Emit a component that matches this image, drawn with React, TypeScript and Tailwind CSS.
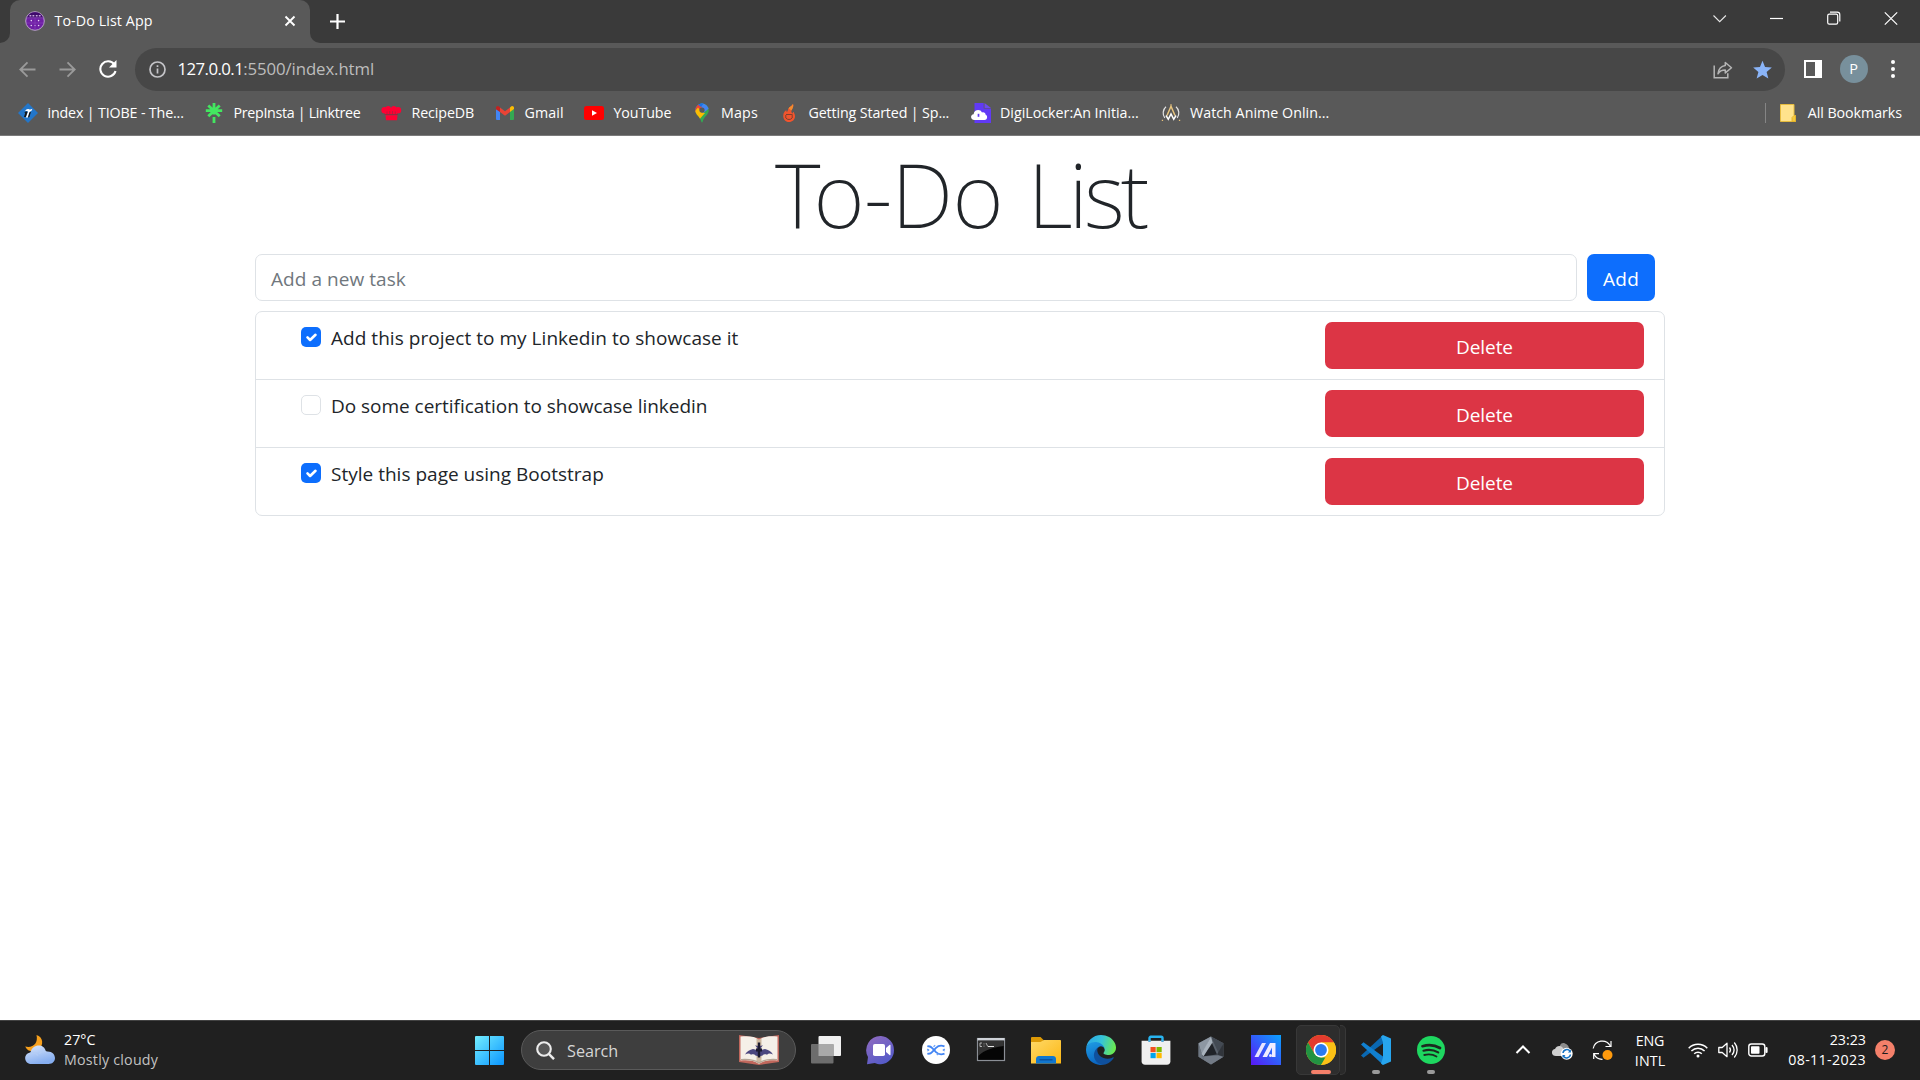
import type { ReactNode } from 'react';

function TabFavicon() {
  return (
    <svg width="20" height="20" viewBox="0 0 20 20" className="shrink-0">
      <circle cx="10" cy="10" r="9.3" fill="#6f1fa5" stroke="#b9a3c8" strokeWidth="1" />
      <path d="M2 6.5A8.8 8.8 0 0 1 18 6.5z" fill="#3f0a6b" />
      <path d="M1 6.8h18" stroke="#8f5bb8" strokeWidth=".6" />
      <path d="M4.5 4.8h1.8M7.5 4.8h1.8M10.8 4.8h1.8M13.8 4.8h1.8" stroke="#c7a8dd" strokeWidth="1.6" />
      <path d="M10 7v12M1 12h18" stroke="#8b45bd" strokeWidth=".6" />
      <g fill="#e5d3f3">
        <circle cx="6.3" cy="9.6" r=".8" />
        <circle cx="13.6" cy="9.6" r=".8" />
        <circle cx="6.3" cy="14.5" r=".8" />
        <circle cx="13.6" cy="14.5" r=".8" />
        <circle cx="10" cy="14.5" r=".5" />
      </g>
    </svg>
  );
}

function TiobeIcon() {
  return (
    <svg width="20" height="20" viewBox="0 0 20 20">
      <path d="M10 0l10 10-10 10L0 10z" fill="#2376c9" />
      <path d="M7 8.3C8 6.300 9.500 5.800 11 6.300c1.300.4 2.200.3 3.300-.5-.3 1.700-1.100 2.700-2.500 2.900L10 14.500H7.800L10 8.600C8.800 8 8 8 7 8.300z" fill="#fff" />
      <path d="M6.200 9.500C7.500 8.300 8.700 8.400 9.500 9l-1.700 5H6l1.300-4.200z" fill="#141414" />
      <path d="M11.300 9.500l1.700-.7-1.600 5.200-1.500.6z" fill="#141414" />
    </svg>
  );
}

function LinktreeIcon() {
  return (
    <svg width="20" height="20" viewBox="0 0 20 20" stroke="#43e660" strokeWidth="2.800" fill="none">
      <path d="M10 0v11.5M10 14v6M1.800 7.700h16.400M4.300 2.400l11.400 10.800M15.700 2.400L4.300 13.200" />
    </svg>
  );
}

function ChefIcon() {
  return (
    <svg width="21" height="20" viewBox="0 0 21 20" fill="#ff0033">
      <circle cx="3.600" cy="7.300" r="3.200" />
      <circle cx="7.200" cy="5.600" r="2.700" />
      <circle cx="12.800" cy="5.600" r="2.700" />
      <circle cx="17" cy="7.300" r="3.200" />
      <path d="M4 5h12v6.500h-12z" />
      <path d="M4.500 12.300h12l-.5 5H5z" />
      <path d="M3.500 11.500h13.500" stroke="#8f2c40" strokeWidth=".9" />
      <path d="M6 8.500v2.500M8.700 8v3M11.500 8v3M14.300 8.500v2.500" stroke="#9c2842" strokeWidth=".7" />
    </svg>
  );
}

function GmailIcon() {
  return (
    <svg width="20" height="20" viewBox="0 0 20 20">
      <path d="M1 6v9.700c0 .8.500 1.300 1.300 1.300H5V8.500z" fill="#4285f4" />
      <path d="M15 8.500V17h2.700c.8 0 1.300-.5 1.300-1.300V6z" fill="#34a853" />
      <path d="M15 4.600V9l4-3V5c0-1.800-2-2.500-3.200-1.300z" fill="#fbbc04" />
      <path d="M5 9V4.600l5 3.700 5-3.700V9l-5 3.800z" fill="#ea4335" />
      <path d="M1 5v1.300L5 9V4.600L4.200 3.700C3 2.500 1 3.200 1 5z" fill="#c5221f" />
    </svg>
  );
}

function YouTubeIcon() {
  return (
    <svg width="20" height="20" viewBox="0 0 20 20">
      <rect x="0" y="3" width="20" height="14" rx="2.500" fill="#f00" />
      <path d="M8 7.300v5.400l5-2.700z" fill="#fff" />
    </svg>
  );
}

function MapsIcon() {
  return (
    <svg width="20" height="20" viewBox="0 0 20 20">
      <clipPath id="pin">
        <path d="M10 .5a6.700 6.700 0 0 0-6.700 6.700c0 4.800 5 6.300 6 11.600.2 1 1.200 1 1.400 0 1-5.300 6-6.800 6-11.600A6.700 6.700 0 0 0 10 .5z" />
      </clipPath>
      <g clipPath="url(#pin)">
        <path d="M0 0h20v20H0z" fill="#34a853" />
        <path d="M0 13L12 0H0z" fill="#1a73e8" />
        <path d="M8 0h12v3L10 11 6 5z" fill="#4285f4" />
        <path d="M0 0h5.500L10 4 5 10 0 8z" fill="#ea4335" />
        <path d="M2 9l4-4.500L10 9.500l3 .5-7 8z" fill="#fbbc04" />
        <path d="M4 0h8l-3 4z" fill="#1a73e8" />
      </g>
      <circle cx="10" cy="7.100" r="2.600" fill="#595959" />
    </svg>
  );
}

function FireIcon() {
  return (
    <svg width="20" height="20" viewBox="0 0 20 20">
      <path d="M14 1c-1.500 2.500-3.500 2.500-4.500 4.500-1 1.800-.5 2.800-1.500 3.200-.8-.2-.8-1.200-.5-2C4.500 9 4 11.500 4.300 14c.4 3 3 5 5.700 5 3.400 0 6-2.500 6-5.800 0-2.200-1.200-3-1.200-4.400-1 .6-1.300 1.200-1.300 2C12 9 12 7.500 13 6c1.200-1.800 1.700-3 1-5z" fill="#f2542d" />
      <path d="M14 1c-1.500 2.500-3.500 2.500-4.500 4.500l3 2C14 5 14.700 3 14 1z" fill="#f28a2e" />
      <path d="M7 11.500h6.500M6.800 12v3c1.500 2 5 2 6.400 0v-3" stroke="#80402f" strokeWidth="1" fill="none" />
    </svg>
  );
}

function DigiLockerIcon() {
  return (
    <svg width="20" height="20" viewBox="0 0 20 20">
      <path d="M3.500 0h9.200v5.500H20V20H3.500z" fill="#613af5" />
      <path d="M13.500 0L20 5h-6.500z" fill="#6d4af0" />
      <path d="M3.500 17C-.8 17-1 11.500 2.600 11.200 2.800 6.500 9.500 5.500 11 9.500c2-.6 3.700.6 3.600 2.300 2.400.8 1.900 5.200-1.200 5.200z" fill="#fff" />
      <path d="M7.500 10.800v3" stroke="#613af5" strokeWidth="1.700" />
    </svg>
  );
}

function AnimeIcon() {
  return (
    <svg width="20" height="20" viewBox="0 0 20 20" fill="none">
      <path d="M5 3.800C1.800 6.500 1.200 11.500 3.800 15M15 3.800c3.200 2.700 3.800 7.700 1.200 11.200" stroke="#e4e4e4" strokeWidth="1.200" />
      <path d="M6 12.500L10 3.300l4 9.200" stroke="#eac67f" strokeWidth="1.500" />
      <path d="M5 12.500l2.300 3.800L10 11l2.700 5.300 2.300-3.800" stroke="#fff" strokeWidth="1.500" />
      <path d="M.8 17.300h1.300M17.900 17.300h1.300" stroke="#e8c27a" strokeWidth="1.300" />
      <path d="M9.400 1.800h1.200" stroke="#eac67f" strokeWidth="1.200" />
    </svg>
  );
}

const bookmarks: { label: string; icon: ReactNode; width: string; tracking: string }[] = [
  { label: 'index | TIOBE - The...', icon: <TiobeIcon />, width: 'w-[186px]', tracking: 'tracking-[-0.15px]' },
  { label: 'PrepInsta | Linktree', icon: <LinktreeIcon />, width: 'w-[177px]', tracking: 'tracking-[-0.31px]' },
  { label: 'RecipeDB', icon: <ChefIcon />, width: 'w-[114px]', tracking: 'tracking-[-0.1px]' },
  { label: 'Gmail', icon: <GmailIcon />, width: 'w-[89px]', tracking: 'tracking-[0.1px]' },
  { label: 'YouTube', icon: <YouTubeIcon />, width: 'w-[107.500px]', tracking: 'tracking-[-0.1px]' },
  { label: 'Maps', icon: <MapsIcon />, width: 'w-[87.500px]', tracking: 'tracking-[0.15px]' },
  { label: 'Getting Started | Sp...', icon: <FireIcon />, width: 'w-[191.500px]', tracking: 'tracking-[-0.13px]' },
  { label: 'DigiLocker:An Initia...', icon: <DigiLockerIcon />, width: 'w-[190px]', tracking: 'tracking-[0px]' },
  { label: 'Watch Anime Onlin...', icon: <AnimeIcon />, width: 'w-[190px]', tracking: 'tracking-[0.03px]' },
];

function TabStrip() {
  return (
    <div className="flex h-[43px] bg-[#3a3a3a] text-white">
      <div className="flex w-[10px] flex-col justify-end bg-[#595959]">
        <div className="h-[43px] rounded-br-[10px] bg-[#3a3a3a]" />
      </div>
      <div className="flex w-[300px] items-center rounded-t-[10px] bg-[#595959] pr-[14px] pb-px pl-[15px]">
        <TabFavicon />
        <span className="ml-[9.500px] flex-1 pb-px text-[14.250px] tracking-[0.1px] whitespace-nowrap">To-Do List App</span>
        <svg width="12" height="12" viewBox="0 0 12 12" stroke="#fff" strokeWidth="1.900">
          <path d="M1.500 1.500l9 9M10.500 1.500l-9 9" />
        </svg>
      </div>
      <div className="w-[10px] bg-[#595959]">
        <div className="h-[43px] rounded-bl-[10px] bg-[#3a3a3a]" />
      </div>
      <svg className="mt-[13px] ml-[9px]" width="17" height="17" viewBox="0 0 17 17" stroke="#fff" strokeWidth="2.200">
        <path d="M8.500 1v15M1 8.500h15" />
      </svg>
      <div className="ml-auto flex items-start pt-[11px] pr-[22px]">
        <svg width="14" height="16" viewBox="0 0 14 16" fill="none" stroke="#e8e8e8" strokeWidth="1.100">
          <path d="M.5 4.500L6.700 10.700l6.200-6.200" />
        </svg>
        <svg className="ml-[43px]" width="13" height="16" viewBox="0 0 13 16" stroke="#fff" strokeWidth="1.200">
          <path d="M0 7.500h13" />
        </svg>
        <svg className="ml-[44px]" width="14" height="16" viewBox="0 0 14 16" fill="none" stroke="#fff" strokeWidth="1.200">
          <rect x=".7" y="3.200" width="10" height="10" rx="1.600" />
          <path d="M3 1.200h7.200c1.500 0 2.600 1 2.600 2.600v6.700" />
        </svg>
        <svg className="ml-[43px]" width="14" height="16" viewBox="0 0 14 16" stroke="#fff" strokeWidth="1.200">
          <path d="M.8 1.300l12.400 12.400M13.200 1.300L.8 13.700" />
        </svg>
      </div>
    </div>
  );
}

function Toolbar() {
  return (
    <div className="flex h-[52px] items-start bg-[#595959] pt-[5px]">
      <div className="flex h-[43px] w-[135px] items-center pb-px pl-[19px]">
        <svg width="17" height="17" viewBox="0 0 17 17" fill="none" stroke="#9a9a9a" strokeWidth="1.800">
          <path d="M16.500 8.500H1.500M8.500 1.300L1.300 8.500l7.200 7.200" />
        </svg>
        <svg className="ml-[23px]" width="17" height="17" viewBox="0 0 17 17" fill="none" stroke="#9a9a9a" strokeWidth="1.800">
          <path d="M.5 8.500h15M8.500 1.300l7.200 7.200-7.200 7.200" />
        </svg>
        <svg className="ml-[23px]" width="18" height="18" viewBox="0 0 18 18" fill="none">
          <path d="M15.300 4.500A7.700 7.700 0 1 0 16.500 11" stroke="#fff" strokeWidth="2.100" />
          <path d="M17.500 0v7.500H10z" fill="#fff" />
        </svg>
      </div>
      <div className="flex h-[43px] w-[1650px] items-center rounded-full bg-[#474747] pr-[13px] pl-[14px]">
        <svg width="17" height="17" viewBox="0 0 17 17" fill="none" stroke="#c4c4c8">
          <circle cx="8.500" cy="8.500" r="7.500" strokeWidth="1.700" />
          <path d="M8.500 7.500v5M8.500 4.200v1.800" strokeWidth="1.700" />
        </svg>
        <span className="ml-[11.500px] pb-px text-[16.800px] whitespace-nowrap text-white">
          <span className="tracking-[-0.56px]">127.0.0.1</span>
          <span className="tracking-[-0.1px] text-[#bdbdbd]">:5500/index.html</span>
        </span>
        <svg className="ml-auto" width="20" height="18" viewBox="0 0 20 18" fill="none" stroke="#b5b5b5" strokeWidth="1.500">
          <path d="M1.200 4.500v12.300h13.600v-4.500" />
          <path d="M12.300 1.500l6.200 5.200-6.200 5.200V9c-4 0-5.800 1.200-7.300 3.800.5-4.200 2.800-7.600 7.300-8.200z" strokeLinejoin="round" />
        </svg>
        <svg className="ml-[20px]" width="19" height="19" viewBox="0 0 24 24" fill="#8ab4f8">
          <path d="M12 .8l3.200 8.100 8.600.6-6.600 5.500 2.200 8.500L12 18.800l-7.400 4.700 2.200-8.500L.2 9.500l8.600-.6z" />
        </svg>
      </div>
      <div className="flex h-[43px] flex-1 items-center pb-px pl-[18.500px]">
        <div className="flex h-[18px] w-[18px] bg-white p-[2px]">
          <div className="h-[14px] w-[9px] bg-[#595959]" />
        </div>
        <div className="ml-[18px] flex h-7 w-7 items-center justify-center rounded-full bg-[#78909c] text-[14.500px] text-white">P</div>
        <div className="ml-[23px] flex flex-col gap-[3px]">
          <div className="h-[4px] w-[4px] rounded-full bg-white" />
          <div className="h-[4px] w-[4px] rounded-full bg-white" />
          <div className="h-[4px] w-[4px] rounded-full bg-white" />
        </div>
      </div>
    </div>
  );
}

function BookmarkBar() {
  return (
    <div className="flex h-[41px] items-center border-b border-[#7b7b7b] bg-[#595959] pb-[4px] pl-[18px] text-[14.250px] text-white">
      {bookmarks.map((b) => (
        <div key={b.label} className={`flex shrink-0 items-center gap-[9.500px] whitespace-nowrap ${b.width}`}>
          {b.icon}
          <span className={b.tracking}>{b.label}</span>
        </div>
      ))}
      <div className="ml-auto flex items-center pr-[18px]">
        <div className="h-5 w-px bg-[#858585]" />
        <svg className="ml-[14px]" width="16" height="18" viewBox="0 0 16 18">
          <path d="M.5 .5h13.500v11h1.500v6H.5z" fill="#ffe38c" stroke="#e6bc3e" strokeWidth="1" />
          <path d="M12 17.500v-4l2-2h1.500v6z" fill="#f5c93c" stroke="#dfae27" strokeWidth=".8" />
        </svg>
        <span className="ml-[12px] tracking-[-0.05px]">All Bookmarks</span>
      </div>
    </div>
  );
}

const tasks = [
  { label: 'Add this project to my Linkedin to showcase it', done: true, tracking: 'tracking-[0.04px]', height: 'h-[68px]' },
  { label: 'Do some certification to showcase linkedin', done: false, tracking: 'tracking-[-0.03px]', height: 'h-[68px]' },
  { label: 'Style this page using Bootstrap', done: true, tracking: 'tracking-[0.01px]', height: 'h-[67px]' },
];

function Checkbox({ checked }: { checked: boolean }) {
  if (!checked) return <div className="mt-[5px] h-5 w-5 rounded-[5px] border border-[#dee2e6] bg-white" />;
  return (
    <div className="mt-[5px] h-5 w-5 rounded-[5px] bg-[#0d6efd]">
      <svg width="20" height="20" viewBox="0 0 20 20" fill="none" stroke="#fff" strokeWidth="2.600" strokeLinecap="round" strokeLinejoin="round">
        <path d="M6.500 10.400l2.600 2.600 5.400-5.200" />
      </svg>
    </div>
  );
}

function TodoPage() {
  return (
    <main className="flex h-[884px] flex-col items-center bg-white text-[19px] text-[#212529]">
      <h1 className="mt-[4px] h-[114px] pl-[1px] font-['Noto_Sans','Open_Sans',sans-serif] text-[88px] leading-[108px] font-[250] whitespace-nowrap">
        <span className="tracking-[-0.700px]">To-Do</span>
        <span className="tracking-[1.800px]"> </span>
        <span className="tracking-[-3.800px]">List</span>
      </h1>
      <div className="flex w-[1410px] gap-[10px] pr-[10px]">
        <div className="flex h-[47px] flex-1 items-center rounded-[7px] border border-[#dee2e6] px-[15px] pt-[4px] tracking-[0.06px] text-[#70777d]">Add a new task</div>
        <div className="flex h-[47px] w-[68px] items-center justify-center rounded-[7px] bg-[#0d6efd] pt-[4px] tracking-[0.300px] text-white">Add</div>
      </div>
      <ul className="mt-[10px] w-[1410px] divide-y divide-[#dee2e6] rounded-[7px] border border-[#dee2e6]">
        {tasks.map((t) => (
          <li key={t.label} className={`flex justify-between pr-5 pl-[45px] ${t.height}`}>
            <div className="flex pt-[10px]">
              <Checkbox checked={t.done} />
              <span className={`ml-[10px] pt-px leading-[30px] whitespace-nowrap ${t.tracking}`}>{t.label}</span>
            </div>
            <div className="mt-[10px] flex h-[47px] w-[319px] items-center justify-center rounded-[7px] bg-[#dc3545] pt-[3px] tracking-[-0.100px] text-white">Delete</div>
          </li>
        ))}
      </ul>
    </main>
  );
}

function TaskCell({ children, dot }: { children: ReactNode; dot?: boolean }) {
  return (
    <div className="flex h-[60px] w-[55px] shrink-0 flex-col items-center pt-[15px]">
      {children}
      {dot && <div className="mt-[5px] h-1 w-2 rounded-full bg-[#9a9a9a]" />}
    </div>
  );
}

function WeatherIcon() {
  return (
    <svg width="30" height="30" viewBox="0 0 30 30">
      <defs>
        <linearGradient id="cloud" x1="0" y1="0" x2=".4" y2="1">
          <stop offset="0" stopColor="#dbe7fb" />
          <stop offset="1" stopColor="#86aef0" />
        </linearGradient>
      </defs>
      <path d="M11.500 0c7 2 7.500 10.500 2 14.500C9 18 2 16.500.2 11.500 7.500 13.500 13.500 8.500 11.500 0z" fill="#f7a01d" />
      <path d="M6.500 29C-1.500 29-2 18.500 5.500 17.500 7 9 19 7.500 21 16.500 32 15 33 29 23.500 29z" fill="url(#cloud)" />
      <path d="M5.500 18c3-1.500 6 .2 7.200 2.500M14 19c2-2.500 5-2.800 7.500-2.200" stroke="#b4cdf5" strokeWidth="1.200" fill="none" />
    </svg>
  );
}

function BookIcon() {
  return (
    <svg width="40" height="30" viewBox="0 0 40 30">
      <path d="M0 0l20 3 20-3v27l-20 3L0 27z" fill="#c0675c" />
      <path d="M1.500 1.500C9 .8 16 1 20 5c4-4 11-4.200 18.500-3.500v24c-7-.5-13.500-.3-18.500 3.500-5-3.800-11.500-4-18.500-3.500z" fill="#f5f0e8" />
      <path d="M17.500 3.500L20 5l2.500-1.500v23L20 29l-2.500-2.500z" fill="#cdb99f" />
      <path d="M2 24.500c7-.5 13-.3 18 3.500 5-3.800 11-4 18-3.500" stroke="#b5a797" strokeWidth="1.200" fill="none" />
      <path d="M6 19.500c2-3.500 5-4.500 8-5.500l3 .8 1.500-1.500-2.500-3 2.500.7L20 9l1.500 2 2.500-.7-2.500 3 1.500 1.500 3-.8c3 1 6 2 8 5.500-3-1.500-4.500-1.200-6 .3-2-.8-3.500-.5-4.500.7L20 21.500l-3.500-1c-1-1.200-2.500-1.500-4.500-.7-1.500-1.500-3-1.800-6-.3z" fill="#4b477f" />
      <path d="M20 7.500v15" stroke="#1c1b30" strokeWidth="2.400" />
      <path d="M17 15h6" stroke="#1c1b30" strokeWidth="3" />
    </svg>
  );
}

function TaskViewIcon() {
  return (
    <svg width="30" height="30" viewBox="0 0 30 30">
      <rect x="7.500" y="1" width="22.500" height="20" rx="1" fill="#f0f0f0" />
      <rect x="0" y="9" width="22.500" height="19.500" rx="1" fill="#6d6d6d" />
      <rect x="7.500" y="9" width="15" height="12" fill="#a9a9a9" />
    </svg>
  );
}

function ChatIcon() {
  return (
    <svg width="30" height="30" viewBox="0 0 30 30">
      <defs>
        <linearGradient id="chat" x1=".2" y1="0" x2=".8" y2="1">
          <stop offset="0" stopColor="#8d6ac0" />
          <stop offset="1" stopColor="#5059c9" />
        </linearGradient>
      </defs>
      <path d="M15 1a14.200 14.200 0 0 1 0 28.300c-2.500 0-4.500-.5-6.200-1.300L1 29.300 2 22A14.200 14.200 0 0 1 15 1z" fill="url(#chat)" />
      <rect x="7" y="9" width="12" height="12" rx="1.800" fill="#fff" />
      <path d="M20 13l3.500-3c.6-.4 1 0 1 .5v9c0 .5-.4 1-1 .5l-3.500-3z" fill="#fff" />
    </svg>
  );
}

function NearbyIcon() {
  return (
    <svg width="30" height="30" viewBox="0 0 30 30" fill="none">
      <circle cx="15" cy="15" r="14" fill="#fff" />
      <path d="M6.300 18.500c2 .8 3.500 0 5-1.700l3.700-3.900c2-2 4.500-3 8.500-1.500" stroke="#4285f4" strokeWidth="1.800" />
      <path d="M6.300 11.500c2-.8 3.500 0 5 1.700l3.700 3.900c2 2 4.500 3 8.500 1.500" stroke="#4285f4" strokeWidth="1.800" />
      <path d="M6.300 14l1.200 1-1.200 1M23.700 14l-1.200 1 1.200 1" stroke="#5c97f6" strokeWidth="1.500" />
      <path d="M12.500 11.700l1.700-1.400M17.500 18.500l-1.700 1.400" stroke="#6ea1f7" strokeWidth="1.300" />
    </svg>
  );
}

function TerminalIcon() {
  return (
    <svg width="30" height="30" viewBox="0 0 30 30">
      <rect x="1.500" y="3.500" width="27" height="22" fill="#050505" stroke="#8b8f96" strokeWidth="1.200" />
      <path d="M1.500 3h27v2.500h-27z" fill="#cfd3d9" />
      <path d="M2.200 6h25.600v5C18 12 8 15 2.200 21z" fill="#333" />
      <path d="M4 8v3.500M4 8h2M4 11.500h2M8 8.500v.8M8 10.700v.8M10 8l1.800 3.500" stroke="#ccc" strokeWidth=".8" fill="none" />
      <path d="M12 11.500h6" stroke="#e5e5e5" strokeWidth="1" />
    </svg>
  );
}

function ExplorerIcon() {
  return (
    <svg width="30" height="30" viewBox="0 0 30 30">
      <defs>
        <linearGradient id="folder" x1="0" y1="0" x2="1" y2="1">
          <stop offset="0" stopColor="#ffd967" />
          <stop offset="1" stopColor="#fcb714" />
        </linearGradient>
      </defs>
      <path d="M0 2.800C0 2.300.4 2 1 2h8.500l3.500 3.500L10 9H0z" fill="#dd9a06" />
      <path d="M0 7h9.500L13 5h16c.6 0 1 .4 1 1v22.500H0z" fill="url(#folder)" />
      <path d="M5 28.500V24c0-1.700 1.300-3 3-3h14c1.700 0 3 1.300 3 3v4.500z" fill="#1177cf" />
      <path d="M8.500 24.800h13" stroke="#0c4a96" strokeWidth="1.200" />
    </svg>
  );
}

function EdgeIcon() {
  return (
    <svg width="30" height="30" viewBox="0 0 256 256">
      <defs>
        <linearGradient id="edgeTop" x1="0" y1=".3" x2="1" y2=".5">
          <stop offset="0" stopColor="#2aa7e8" />
          <stop offset=".5" stopColor="#36c3d8" />
          <stop offset="1" stopColor="#6bea4e" />
        </linearGradient>
        <linearGradient id="edgeLeft" x1=".2" y1="0" x2=".5" y2="1">
          <stop offset="0" stopColor="#1f9de4" />
          <stop offset="1" stopColor="#0a63c0" />
        </linearGradient>
      </defs>
      <path d="M231 190.500a94 94 0 0 1-10.500 4.700 101.900 101.900 0 0 1-35.900 6.500c-47.300 0-88.500-32.500-88.500-74.300a31.500 31.500 0 0 1 16.400-27.300c-42.800 1.800-53.800 46.400-53.800 72.500 0 74 68.100 81.400 82.800 81.400 7.900 0 19.800-2.300 27-4.600l1.300-.4a128.300 128.300 0 0 0 66.600-52.800 4 4 0 0 0-5.400-5.700z" fill="#0f509d" />
      <path d="M105.700 241.400a79.200 79.200 0 0 1-22.700-21.300 80.700 80.700 0 0 1 29.500-120c3.100-1.500 8.500-4.100 15.600-4a32.400 32.400 0 0 1 25.700 13 31.900 31.900 0 0 1 6.300 18.700c0-.2 24.500-79.600-80-79.600-43.900 0-80 41.700-80 78.200a130.200 130.200 0 0 0 12.100 56 128 128 0 0 0 156.400 67 75.500 75.500 0 0 1-62.800-8z" fill="url(#edgeLeft)" />
      <path d="M152.300 148.900c-.9 1-3.400 2.500-3.400 5.600 0 2.600 1.700 5.200 4.800 7.300 14.300 10 41.400 8.600 41.500 8.600a59.600 59.600 0 0 0 30.300-8.300A61.400 61.400 0 0 0 256 109.200c.3-22.400-8-37.300-11.300-43.900C223.500 23.900 177.700 0 128 0A128 128 0 0 0 0 126.200c.5-36.500 36.800-66 80-66 3.500 0 23.500.3 42 10a72.600 72.600 0 0 1 30.900 29.300c6.100 10.600 7.200 24.100 7.200 29.500 0 5.400-2.700 13.300-7.800 19.900z" fill="url(#edgeTop)" />
    </svg>
  );
}

function StoreIcon() {
  return (
    <svg width="30" height="30" viewBox="0 0 30 30">
      <path d="M8.500 7V3.200c0-.8.500-1.400 1.300-1.400h10.400c.8 0 1.300.6 1.300 1.400V7" stroke="#28b4f0" strokeWidth="2.400" fill="none" />
      <path d="M.6 5.700h28.800v20.500c0 2.200-1.300 3.600-3.500 3.600H4.100C1.900 29.800.6 28.400.6 26.200z" fill="#f0f0f0" />
      <path d="M8.500 5.700v1M21.500 5.700v1" stroke="#1c8fd0" strokeWidth="2.400" />
      <path d="M9.500 12h5.200v5.200H9.500z" fill="#f25022" />
      <path d="M15.500 12h5.200v5.200h-5.200z" fill="#7fba00" />
      <path d="M9.500 18h5.200v5.200H9.500z" fill="#00a4ef" />
      <path d="M15.500 18h5.200v5.200h-5.200z" fill="#ffb900" />
    </svg>
  );
}

function HexIcon() {
  return (
    <svg width="30" height="30" viewBox="0 0 30 30">
      <path d="M15 1.500l12.500 6.700v13.600L15 29.500 2.500 21.800V8.200z" fill="#59616b" />
      <path d="M15 1.500L2.500 8.200 6 20z" fill="#8d97a2" />
      <path d="M15 1.500l12.500 6.700L23 19z" fill="#434a53" />
      <path d="M2.500 8.200v13.600l5.500 3.400L6 20z" fill="#6e7782" />
      <path d="M8 25.200L15 29.500l12.500-7.700L22 20.500 7 21.500z" fill="#737b86" />
      <path d="M15.500 7l5.500 12.500-13.500 1.800z" fill="#202328" />
      <path d="M15 1.500l1.500 6L7.500 21.300 5.500 19z" fill="#a8b2bc" />
      <path d="M21 19.500l6.500-11v13.300z" fill="#31353b" />
    </svg>
  );
}

function ArmouryIcon() {
  return (
    <svg width="30" height="30" viewBox="0 0 30 30">
      <defs>
        <linearGradient id="arm" x1="0" y1="1" x2="1" y2="0">
          <stop offset="0" stopColor="#5a17f5" />
          <stop offset="1" stopColor="#0aa2ff" />
        </linearGradient>
      </defs>
      <path d="M0 0h30v30H0z" fill="url(#arm)" />
      <path d="M3.500 22L11 8h4L7.500 22z" fill="#e8e4ff" />
      <path d="M11.500 22L19 8h5.500v14H21v-9.500L16 22z" fill="#f0ecff" />
      <circle cx="19.500" cy="20.500" r="1.500" fill="#f0ecff" />
    </svg>
  );
}

function ChromeIcon() {
  return (
    <svg width="30" height="30" viewBox="0 0 30 30" className="shrink-0">
      <circle cx="15" cy="15" r="15" fill="#fbc116" />
      <path d="M2 7.500A15 15 0 0 1 28 7.500H15L8.500 18.700z" fill="#e33b2e" />
      <path d="M2 7.500L8.500 18.800 15 22.500h6.500L15 30A15 15 0 0 1 2 7.500z" fill="#229342" />
      <path d="M28 7.500A15 15 0 0 1 15 30l6.500-11.200L15 7.500z" fill="#fbc116" />
      <circle cx="15" cy="15" r="7.500" fill="#fff" />
      <circle cx="15" cy="15" r="5.900" fill="#2a7af0" />
    </svg>
  );
}

function CodeIcon() {
  return (
    <svg width="30" height="30" viewBox="0 0 30 30">
      <path d="M0 20.500l2.500 2.300L22 8.500V.2z" fill="#0a68b2" />
      <path d="M0 9.500l2.500-2.300L22 21.500v8.300z" fill="#1180d0" />
      <path d="M22 0l8 3.500v23L22 30l-2-1.500 2-6V7.500l-2-6z" fill="#27a5ee" />
    </svg>
  );
}

function SpotifyIcon() {
  return (
    <svg width="30" height="30" viewBox="0 0 30 30" fill="none" stroke="#1c2a20" strokeLinecap="round">
      <circle cx="15" cy="15" r="14" fill="#1ed760" stroke="none" />
      <path d="M6.500 11.200c6-1.700 12.500-1 17.500 1.800" strokeWidth="2.700" />
      <path d="M7.500 15.700c5-1.400 10.300-.8 14.700 1.700" strokeWidth="2.200" />
      <path d="M8.300 20c4.300-1 8.500-.7 12.200 1.500" strokeWidth="1.800" />
    </svg>
  );
}

function Tray() {
  return (
    <div className="ml-[54.500px] flex items-center text-white">
      <svg width="20" height="20" viewBox="0 0 20 20" fill="none" stroke="#fff" strokeWidth="2">
        <path d="M3.500 13l6.500-6.500 6.500 6.500" />
      </svg>
      <svg className="ml-[19px]" width="21" height="20" viewBox="0 0 21 20">
        <path d="M8 14C6 4 10 2 13 3.500c3 1 4.500 3.500 4 7z" fill="#8c8c8c" />
        <path d="M4 16C-1.500 16-1 9.500 3 9 4.500 5 10 5 11.500 9c2 .5 3 3 2 7z" fill="#cfcfcf" />
        <circle cx="14.700" cy="13.700" r="6" fill="#fff" />
        <path d="M11 13a3.900 3.900 0 0 1 7-1.800M18.400 14.500a3.900 3.900 0 0 1-7 1.800" stroke="#1372c4" strokeWidth="1.500" fill="none" />
        <path d="M18.900 9.500v3h-3zM10.500 18v-3h3z" fill="#1372c4" />
      </svg>
      <svg className="ml-[19px]" width="21" height="22" viewBox="0 0 21 22" fill="none" stroke="#fff" strokeWidth="1.200">
        <path d="M1.200 9.500a9.200 9.200 0 0 1 17-2.800M19 2v5.500h-5.500" />
        <path d="M10.500 20.300a9 9 0 0 1-8.500-5.200M1.700 20v-5.300H7" />
        <circle cx="15.500" cy="16" r="5" fill="#ff9a0d" stroke="none" />
      </svg>
      <div className="ml-[17px] w-[40px] pt-px text-center text-[14.250px] leading-[20px]">
        <div className="tracking-[-0.200px]">ENG</div>
        <div className="tracking-[0.100px]">INTL</div>
      </div>
      <svg className="ml-[18px]" width="20" height="20" viewBox="0 0 20 20" fill="none" stroke="#fff" strokeWidth="1.500">
        <path d="M.7 8.200a13 13 0 0 1 18.600 0M3.400 11a9.200 9.200 0 0 1 13.200 0M6.200 13.700a5.400 5.400 0 0 1 7.600 0" />
        <circle cx="10" cy="16" r="1.500" fill="#fff" stroke="none" />
      </svg>
      <svg className="ml-[10px]" width="20" height="20" viewBox="0 0 20 20" fill="none" stroke="#fff" strokeWidth="1.300">
        <path d="M.8 7.500h3.400L9 3.300v13.400l-4.800-4.200H.8z" strokeLinejoin="round" />
        <path d="M11.500 7.500c1.200 1.500 1.200 3.500 0 5M14 5c2.500 3 2.500 7 0 10M16.300 2.500c3.800 4.500 3.800 10.500 0 15" />
      </svg>
      <svg className="ml-[10px]" width="20" height="20" viewBox="0 0 20 20" fill="none">
        <rect x=".8" y="4" width="16" height="12" rx="2.500" stroke="#fff" strokeWidth="1.400" />
        <rect x="3" y="6.200" width="8.500" height="7.600" rx=".8" fill="#fff" />
        <path d="M18.500 8v4" stroke="#fff" strokeWidth="2.200" strokeLinecap="round" />
      </svg>
      <div className="ml-[18px] w-[80px] text-right text-[14.250px] leading-[20px] whitespace-nowrap">
        <div>23:23</div>
        <div className="tracking-[0.350px]">08-11-2023</div>
      </div>
      <div className="ml-[9px] flex h-5 w-5 items-center justify-center rounded-full bg-[#f4806a] text-[12px] text-[#1c1c1c]">2</div>
    </div>
  );
}

function Taskbar() {
  return (
    <footer className="flex h-[60px] items-center bg-[#202020] shadow-[inset_0_1px_0_#424242]">
      <div className="flex w-[475px] items-center pl-[25px]">
        <WeatherIcon />
        <div className="ml-[9px] text-[14.250px] leading-[20px]">
          <div className="text-white">27°C</div>
          <div className="tracking-[0.220px] text-[#c2c2c2]">Mostly cloudy</div>
        </div>
      </div>
      <svg width="29" height="29" viewBox="0 0 29 29" className="shrink-0">
        <defs>
          <linearGradient id="win" gradientUnits="userSpaceOnUse" x1="0" y1="0" x2="29" y2="29">
            <stop offset="0" stopColor="#73eeff" />
            <stop offset="1" stopColor="#0a95ff" />
          </linearGradient>
        </defs>
        <path d="M0 1a1 1 0 0 1 1-1h13v14H0zM15 0h13a1 1 0 0 1 1 1v13H15zM0 15h14v14H1a1 1 0 0 1-1-1zM15 15h14v13a1 1 0 0 1-1 1H15z" fill="url(#win)" />
      </svg>
      <div className="ml-[17px] flex h-10 w-[275px] shrink-0 items-center rounded-full border border-[#5a5a5a] bg-[#3e3e3e] pr-[16px] pl-[14px]">
        <svg width="19" height="19" viewBox="0 0 19 19" fill="none" stroke="#ececec" strokeWidth="2.100">
          <circle cx="8" cy="8" r="6.800" fill="#575757" />
          <path d="M12.800 12.800l5.200 5.400" strokeWidth="2.400" />
        </svg>
        <span className="ml-[12px] flex-1 pt-[3px] text-[16.200px] text-[#d6d6d6]">Search</span>
        <BookIcon />
      </div>
      <div className="ml-[2.500px] flex">
        <TaskCell><TaskViewIcon /></TaskCell>
        <TaskCell><ChatIcon /></TaskCell>
        <TaskCell><NearbyIcon /></TaskCell>
        <TaskCell><TerminalIcon /></TaskCell>
        <TaskCell><ExplorerIcon /></TaskCell>
        <TaskCell><EdgeIcon /></TaskCell>
        <TaskCell><StoreIcon /></TaskCell>
        <TaskCell><HexIcon /></TaskCell>
        <TaskCell><ArmouryIcon /></TaskCell>
        <div className="flex h-[60px] w-[55px] shrink-0 pt-[5px] pl-[2.500px]">
          <div className="flex h-[50px] w-[44px] flex-col items-center rounded-[5px] border border-[#383838] bg-[#2d2d2d] pt-[9px] pl-[6px]">
            <ChromeIcon />
            <div className="mt-[5px] h-1 w-5 shrink-0 rounded-full bg-[#f4806a]" />
          </div>
          <div className="h-[50px] w-[6px] rounded-r-[5px] border-y border-r border-[#383838] bg-[#2a2a2a]" />
        </div>
        <TaskCell dot><CodeIcon /></TaskCell>
        <TaskCell dot><SpotifyIcon /></TaskCell>
      </div>
      <Tray />
    </footer>
  );
}

export default function App() {
  return (
    <div className="flex h-[1080px] w-[1920px] flex-col overflow-hidden font-['Open_Sans','Noto_Sans',sans-serif]">
      <TabStrip />
      <Toolbar />
      <BookmarkBar />
      <TodoPage />
      <Taskbar />
    </div>
  );
}
